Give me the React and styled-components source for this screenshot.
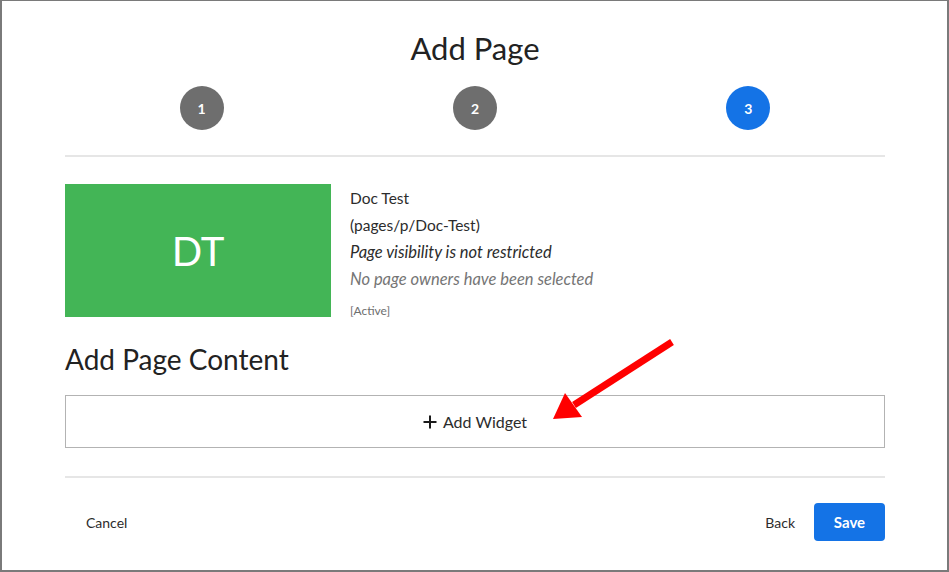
import React from "react"
import styled, { createGlobalStyle } from "styled-components"

const Global = createGlobalStyle`
  html, body {
    margin: 0;
    padding: 0;
    background: #ffffff;
  }
  body {
    font-family: "Lato", "Open Sans", sans-serif;
    color: #2c2c2c;
  }
`

const Frame = styled.div`
  position: relative;
  box-sizing: border-box;
  width: 949px;
  height: 572px;
  border: 2px solid #7a7a7a;
  border-top-width: 1px;
  background: #fff;
  padding: 0 62px 0 63px;
  display: flex;
  flex-direction: column;
`

const Title = styled.h1`
  margin: 28px 0 0;
  text-align: center;
  font-size: 31px;
  font-weight: 400;
  line-height: 38px;
  color: #222;
`

const Steps = styled.div`
  display: grid;
  grid-template-columns: repeat(3, 1fr);
  margin-top: 19px;
  padding-bottom: 25px;
  border-bottom: 2px solid #e6e6e6;
`

const Step = styled.div`
  justify-self: center;
  width: 44px;
  height: 44px;
  border-radius: 50%;
  background: ${p => (p.$active ? "#1473e6" : "#6e6e6e")};
  color: #fff;
  font-size: 14px;
  font-weight: 700;
  display: flex;
  align-items: center;
  justify-content: center;
`

const Card = styled.div`
  display: flex;
  height: 133px;
  margin-top: 27px;
  gap: 19px;
`

const Thumb = styled.div`
  width: 266px;
  height: 133px;
  background: #43b556;
  color: #fff;
  font-size: 40px;
  display: flex;
  align-items: center;
  justify-content: center;
  flex-shrink: 0;
`

const Info = styled.div`
  display: flex;
  flex-direction: column;
  padding-top: 1px;
`

const Line = styled.div`
  font-size: ${p => (p.$italic ? "16.5px" : "15.5px")};
  line-height: 27px;
  color: ${p => p.$color || "#2c2c2c"};
  font-style: ${p => (p.$italic ? "italic" : "normal")};
`

const Status = styled.div`
  margin-top: 11px;
  font-size: 12px;
  line-height: 14px;
  color: #6e6e6e;
`

const Heading = styled.h2`
  margin: 24px 0 0;
  font-size: 28px;
  font-weight: 400;
  line-height: 36px;
  color: #222;
`

const WidgetButton = styled.button`
  margin-top: 18px;
  height: 53px;
  border: 1px solid #b3b3b3;
  background: #fff;
  display: flex;
  align-items: center;
  justify-content: center;
  gap: 6px;
  font-family: inherit;
  font-size: 16px;
  color: #2c2c2c;
  cursor: pointer;
`

const Divider = styled.div`
  margin-top: 28px;
  border-top: 2px solid #e6e6e6;
`

const Footer = styled.div`
  display: flex;
  align-items: center;
  margin-top: 25px;
`

const TextButton = styled.button`
  border: none;
  background: none;
  font-family: inherit;
  font-size: 14px;
  color: #2c2c2c;
  padding: 0 ${p => p.$pad || "19px"};
  cursor: pointer;
`

const Spacer = styled.div`
  flex: 1;
`

const SaveButton = styled.button`
  width: 71px;
  height: 38px;
  border: none;
  border-radius: 4px;
  background: #1473e6;
  color: #fff;
  font-family: inherit;
  font-size: 15px;
  font-weight: 700;
  cursor: pointer;
`

const Arrow = styled.svg`
  position: absolute;
  left: 0;
  top: 0;
  pointer-events: none;
`

const PlusIcon = () => (
  <svg width="14" height="14" viewBox="0 0 14 14">
    <path d="M7 0.5V13.5M0.5 7H13.5" stroke="#1a1a1a" strokeWidth="2" />
  </svg>
)

export default function App() {
  return (
    <>
      <Global />
      <Frame>
        <Title>Add Page</Title>
        <Steps>
          <Step>1</Step>
          <Step>2</Step>
          <Step $active>3</Step>
        </Steps>
        <Card>
          <Thumb>DT</Thumb>
          <Info>
            <Line>Doc Test</Line>
            <Line>(pages/p/Doc-Test)</Line>
            <Line $italic>Page visibility is not restricted</Line>
            <Line $italic $color="#757575">No page owners have been selected</Line>
            <Status>[Active]</Status>
          </Info>
        </Card>
        <Heading>Add Page Content</Heading>
        <WidgetButton>
          <PlusIcon />
          Add Widget
        </WidgetButton>
        <Divider />
        <Footer>
          <TextButton $pad="21px">Cancel</TextButton>
          <Spacer />
          <TextButton>Back</TextButton>
          <SaveButton>Save</SaveButton>
        </Footer>
        <Arrow width="949" height="572" viewBox="0 0 949 572">
          <line x1="670" y1="341" x2="572" y2="404" stroke="#ff0000" strokeWidth="7" />
          <polygon points="551,418 563,392 580,416" fill="#ff0000" />
        </Arrow>
      </Frame>
    </>
  )
}
